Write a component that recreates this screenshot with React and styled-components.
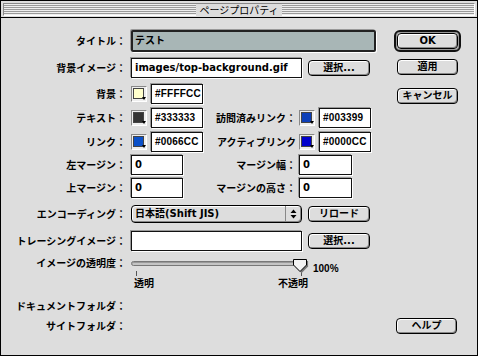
import React from 'react'
import styled, { createGlobalStyle } from 'styled-components'

const GlobalStyle = createGlobalStyle`
  html, body {
    margin: 0;
    padding: 0;
    background: #fff;
  }
  body {
    font-family: "DejaVu Sans", "Noto Sans CJK JP", sans-serif;
    color: #000;
  }
`

const Window = styled.div`
  width: 478px;
  height: 356px;
  box-sizing: border-box;
  border: 1px solid #000;
  background: #dddddd;
  display: flex;
  flex-direction: column;
`

const TitleBar = styled.div`
  height: 17px;
  flex: none;
  box-sizing: border-box;
  border-bottom: 1px solid #000;
  padding: 2px 2px 1px 2px;
  background: #dddddd;
  display: flex;
`

const Stripes = styled.div`
  flex: 1;
  border: 1px solid;
  border-color: #888 #fff #fff #888;
  background: repeating-linear-gradient(to bottom, #eeeeee 0 1px, #9a9a9a 1px 2px);
  display: flex;
  justify-content: center;
  align-items: center;
`

const TitleText = styled.span`
  background: #dddddd;
  padding: 0 3px;
  font: 10px/12px "Noto Sans CJK JP", sans-serif;
`

const Body = styled.div`
  flex: 1;
  display: flex;
  min-height: 0;
`

const Form = styled.div`
  width: 393px;
  flex: none;
  box-sizing: border-box;
  padding: 12px 0 0 7px;
  display: flex;
  flex-direction: column;
`

const Side = styled.div`
  flex: 1;
  display: flex;
  flex-direction: column;
  align-items: flex-start;
  padding: 12px 0 21px 0;
`

const Row = styled.div`
  display: flex;
  align-items: center;
  height: ${(p) => p.$h}px;
  margin-top: ${(p) => p.$mt || 0}px;
  flex: none;
`

const Label = styled.div`
  width: 118px;
  margin-right: 5px;
  text-align: right;
  font: bold 10px/12px "Noto Sans CJK JP", sans-serif;
  white-space: nowrap;
  flex: none;
`

const SubLabel = styled(Label)`
  width: ${(p) => p.$w}px;
  margin-right: 3px;
`

const Field = styled.div`
  width: ${(p) => p.$w}px;
  height: 100%;
  box-sizing: border-box;
  background: ${(p) => p.$bg || '#fff'};
  border: ${(p) => (p.$focus ? '2px solid #222' : '1px solid #111')};
  border-radius: ${(p) => (p.$focus ? 2 : 0)}px;
  box-shadow: 1px 1px 0 #fff, -1px -1px 0 #999;
  padding-left: ${(p) => (p.$focus ? 2 : 3)}px;
  display: flex;
  align-items: center;
  font: bold 10px/12px "DejaVu Sans", "Noto Sans CJK JP", sans-serif;
  white-space: nowrap;
  overflow: hidden;
  flex: none;
`

const HexField = styled(Field)`
  font-family: "Liberation Sans", sans-serif;
  letter-spacing: 0.2px;
`

const Swatch = styled.div`
  position: relative;
  width: 16px;
  height: 16px;
  box-sizing: border-box;
  border: 1px solid;
  border-color: #888 #fff #fff #888;
  background: #eee;
  padding: 1px 2px 2px 1px;
  margin-right: 4px;
  flex: none;

  &::before {
    content: '';
    display: block;
    width: 100%;
    height: 100%;
    box-sizing: border-box;
    border: 1px solid #444;
    background: ${(p) => p.$color};
  }

  &::after {
    content: '';
    position: absolute;
    right: 0;
    bottom: 1px;
    border-left: 2px solid transparent;
    border-right: 2px solid transparent;
    border-top: 3px solid #000;
  }
`

const Button = styled.div`
  width: ${(p) => p.$w || 61}px;
  height: 16px;
  box-sizing: border-box;
  margin-left: ${(p) => p.$ml || 0}px;
  margin-top: ${(p) => p.$mt || 0}px;
  border: 1px solid #000;
  border-radius: 4px;
  background: #dddddd;
  box-shadow: inset 1px 1px 0 #fff, inset -1px -1px 0 #888;
  display: flex;
  align-items: center;
  justify-content: center;
  font: bold 10px/12px "DejaVu Sans", "Noto Sans CJK JP", sans-serif;
  flex: none;
`

const DefaultRing = styled.div`
  width: 67px;
  height: 22px;
  box-sizing: border-box;
  border: 2px solid #111;
  border-radius: 6px;
  padding: 1px;
  box-shadow: inset 0 0 0 1px #999;
`

const HelpButton = styled(Button)`
  margin-top: auto;
`

const Popup = styled.div`
  width: 171px;
  height: 100%;
  box-sizing: border-box;
  border: 1px solid #000;
  border-radius: 4px;
  background: #dddddd;
  box-shadow: inset 1px 1px 0 #fff, inset -1px -1px 0 #888;
  display: flex;
  align-items: center;
  font: bold 10px/12px "DejaVu Sans", "Noto Sans CJK JP", sans-serif;
  flex: none;
`

const PopupText = styled.span`
  flex: 1;
  padding-left: 3px;
  white-space: nowrap;
`

const PopupArrows = styled.div`
  width: 15px;
  height: 100%;
  border-left: 1px solid #888;
  display: flex;
  align-items: center;
  justify-content: center;
`

const SliderWrap = styled.div`
  position: relative;
  width: 177px;
  height: 100%;
  flex: none;
`

const Track = styled.div`
  width: 168px;
  height: 5px;
  margin-top: 5px;
  box-sizing: border-box;
  border: 1px solid #777;
  border-radius: 3px;
  background: #c4c4c4;
  box-shadow: inset 0 1px 0 #999;
`

const Thumb = styled.svg`
  position: absolute;
  left: 162px;
  top: 3px;
`

const Percent = styled.span`
  align-self: flex-end;
  margin-left: 5px;
  font: bold 10px/12px "Liberation Sans", sans-serif;
  transform: translateY(5px);
`

const TickRow = styled.div`
  display: flex;
  height: 20px;
  margin-top: 1px;
  padding-left: 126px;
  flex: none;
`

const TickGroup = styled.div`
  width: ${(p) => p.$w}px;
  margin-left: ${(p) => p.$ml}px;
  display: flex;
  flex-direction: column;
  align-items: ${(p) => p.$align};
`

const Tick = styled.div`
  width: 1px;
  height: 5px;
  background: #555;
  margin: 0 ${(p) => p.$mr || 0}px 1px ${(p) => p.$mlt || 0}px;
`

const TickText = styled.span`
  font: bold 10px/12px "Noto Sans CJK JP", sans-serif;
  white-space: nowrap;
`

const App = () => {
  return (
    <>
      <GlobalStyle />
      <Window>
        <TitleBar>
          <Stripes>
            <TitleText>ページプロパティ</TitleText>
          </Stripes>
        </TitleBar>
        <Body>
          <Form>
            <Row $h={22}>
              <Label>タイトル：</Label>
              <Field $w={245} $bg='#a8b6b6' $focus>
                テスト
              </Field>
            </Row>
            <Row $h={20} $mt={6}>
              <Label>背景イメージ：</Label>
              <Field $w={171}>images/top-background.gif</Field>
              <Button $w={62} $ml={6}>選択...</Button>
            </Row>
            <Row $h={20} $mt={6}>
              <Label>背景：</Label>
              <Swatch $color='#FFFFCC' />
              <HexField $w={52}>#FFFFCC</HexField>
            </Row>
            <Row $h={20} $mt={4}>
              <Label>テキスト：</Label>
              <Swatch $color='#333333' />
              <HexField $w={52}>#333333</HexField>
              <SubLabel $w={93}>訪問済みリンク：</SubLabel>
              <Swatch $color='#0d3fb8' />
              <HexField $w={52}>#003399</HexField>
            </Row>
            <Row $h={20} $mt={4}>
              <Label>リンク：</Label>
              <Swatch $color='#0a50c8' />
              <HexField $w={52}>#0066CC</HexField>
              <SubLabel $w={93}>アクティブリンク</SubLabel>
              <Swatch $color='#0000CC' />
              <HexField $w={52}>#0000CC</HexField>
            </Row>
            <Row $h={20} $mt={3}>
              <Label>左マージン：</Label>
              <Field $w={52}>0</Field>
              <SubLabel $w={113}>マージン幅：</SubLabel>
              <Field $w={53}>0</Field>
            </Row>
            <Row $h={20} $mt={3}>
              <Label>上マージン：</Label>
              <Field $w={52}>0</Field>
              <SubLabel $w={113}>マージンの高さ：</SubLabel>
              <Field $w={53}>0</Field>
            </Row>
            <Row $h={18} $mt={7}>
              <Label>エンコーディング：</Label>
              <Popup>
                <PopupText>日本語(Shift JIS)</PopupText>
                <PopupArrows>
                  <svg width='7' height='10' viewBox='0 0 7 10'>
                    <path d='M3.5 0.5 L6.5 4 H0.5 Z M3.5 9.5 L6.5 6 H0.5 Z' fill='#000' />
                  </svg>
                </PopupArrows>
              </Popup>
              <Button $w={62} $ml={6}>リロード</Button>
            </Row>
            <Row $h={20} $mt={8}>
              <Label>トレーシングイメージ：</Label>
              <Field $w={171}></Field>
              <Button $w={62} $ml={6}>選択...</Button>
            </Row>
            <Row $h={14} $mt={5}>
              <Label>イメージの透明度：</Label>
              <SliderWrap>
                <Track />
                <Thumb width='16' height='14' viewBox='0 0 16 14'>
                  <path d='M1.5 1.5 H14.5 V7 L8 13.5 L1.5 7 Z' fill='#777' transform='translate(0.6 0.6)' />
                  <path d='M0.5 0.5 H13.5 V6 L7 12.5 L0.5 6 Z' fill='#f2f2f2' stroke='#000' />
                </Thumb>
              </SliderWrap>
              <Percent>100%</Percent>
            </Row>
            <TickRow>
              <TickGroup $w={22} $ml={0} $align='flex-start'>
                <Tick $mlt={2} />
                <TickText>透明</TickText>
              </TickGroup>
              <TickGroup $w={32} $ml={120} $align='flex-end'>
                <Tick $mr={6} />
                <TickText>不透明</TickText>
              </TickGroup>
            </TickRow>
            <Row $h={16} $mt={7}>
              <Label>ドキュメントフォルダ：</Label>
            </Row>
            <Row $h={16} $mt={4}>
              <Label>サイトフォルダ：</Label>
            </Row>
          </Form>
          <Side>
            <DefaultRing>
              <Button>OK</Button>
            </DefaultRing>
            <Button $ml={3} $mt={7}>適用</Button>
            <Button $ml={3} $mt={13}>キャンセル</Button>
            <HelpButton $ml={2}>ヘルプ</HelpButton>
          </Side>
        </Body>
      </Window>
    </>
  )
}

export default App
